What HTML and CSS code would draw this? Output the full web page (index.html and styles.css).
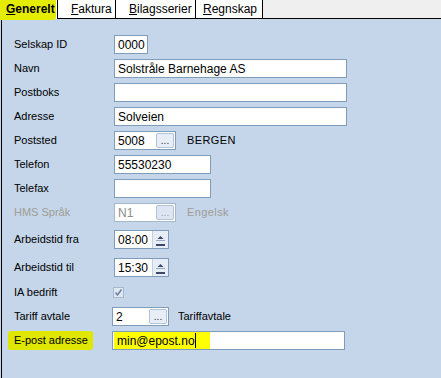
FILE: index.html
```html
<!DOCTYPE html>
<html lang="no">
<head>
  <meta charset="UTF-8">
  <title>Generelt</title>
  <link rel="stylesheet" href="styles.css">
</head>
<body>
  <div class="tabs">
    <div class="tab active"><span class="hl"><u>G</u>enerelt</span></div>
    <div class="tab tab-faktura"><u>F</u>aktura</div>
    <div class="tab tab-bilag"><u>B</u>ilagsserier</div>
    <div class="tab tab-regnskap"><u>R</u>egnskap</div>
    <div class="tab-rest"></div>
  </div>

  <div class="panel">
    <div class="row">
      <div class="label">Selskap ID</div>
      <div class="field w-id">0000</div>
    </div>
    <div class="row">
      <div class="label">Navn</div>
      <div class="field w-long">Solstråle Barnehage AS</div>
    </div>
    <div class="row">
      <div class="label">Postboks</div>
      <div class="field w-long"></div>
    </div>
    <div class="row">
      <div class="label">Adresse</div>
      <div class="field w-long">Solveien</div>
    </div>
    <div class="row">
      <div class="label">Poststed</div>
      <div class="field w-lookup">5008<span class="dots">...</span></div>
      <div class="after">BERGEN</div>
    </div>
    <div class="row">
      <div class="label">Telefon</div>
      <div class="field w-mid">55530230</div>
    </div>
    <div class="row">
      <div class="label">Telefax</div>
      <div class="field w-mid"></div>
    </div>
    <div class="row disabled">
      <div class="label">HMS Språk</div>
      <div class="field w-lookup">N1<span class="dots">...</span></div>
      <div class="after">Engelsk</div>
    </div>
    <div class="row tall">
      <div class="label">Arbeidstid fra</div>
      <div class="field w-time">08:00<span class="spin">
        <svg width="15" height="17" viewBox="0 0 15 17"><path d="M4.5 8 L7.5 5 L10.5 8 Z" fill="#3c4a6a"/><path d="M3 9.5 H12" stroke="#9aaac4"/><path d="M3 14 H12" stroke="#3c4a6a" stroke-width="2"/></svg>
      </span></div>
    </div>
    <div class="row tall">
      <div class="label">Arbeidstid til</div>
      <div class="field w-time">15:30<span class="spin">
        <svg width="15" height="17" viewBox="0 0 15 17"><path d="M4.5 8 L7.5 5 L10.5 8 Z" fill="#3c4a6a"/><path d="M3 9.5 H12" stroke="#9aaac4"/><path d="M3 14 H12" stroke="#3c4a6a" stroke-width="2"/></svg>
      </span></div>
    </div>
    <div class="row">
      <div class="label">IA bedrift</div>
      <div class="check">
        <svg width="9" height="9" viewBox="0 0 9 9"><path d="M1.5 4.5 L3.5 7 L7.5 1.5" fill="none" stroke="#6c84a8" stroke-width="1.6"/></svg>
      </div>
    </div>
    <div class="row">
      <div class="label">Tariff avtale</div>
      <div class="field w-tariff">2<span class="dots">...</span></div>
      <div class="after near">Tariffavtale</div>
    </div>
    <div class="row">
      <div class="label"><span class="hl-label">E-post adresse</span></div>
      <div class="field w-epost"><span class="hl-text">min@epost.no<span class="caret"></span></span></div>
    </div>
  </div>
</body>
</html>
```

FILE: styles.css
```css
body {
  margin: 0;
  font-family: "Liberation Sans", Arial, sans-serif;
  font-size: 11px;
  color: #000;
  background-color: #c5d6ea;
  width: 441px;
  height: 378px;
  overflow: hidden;
}

/* faner */
.tabs {
  display: flex;
  height: 19px;
  background-color: #efefef;
  font-size: 12px;
}

.tab {
  background-color: #fff;
  border-right: 1px solid #000;
  border-bottom: 1px solid #000;
  height: 18px;
  line-height: 19px;
  box-sizing: content-box;
}

.tab.active {
  width: 57px;
  border-bottom: none;
  height: 19px;
  padding: 0;
}

.tab.active .hl {
  display: block;
  background-color: #e4ec00;
  height: 20px;
  margin-right: 1px;
  border-radius: 0 0 3px 0;
  padding-left: 6px;
  font-weight: bold;
  line-height: 19px;
}

.tab-faktura {
  width: 44px;
  padding-left: 13px;
}

.tab-bilag {
  width: 66px;
  padding-left: 13px;
}

.tab-regnskap {
  width: 59px;
  padding-left: 7px;
}

.tab-rest {
  flex: 1;
  border-bottom: 1px solid #000;
  height: 18px;
}

/* innhold */
.panel {
  margin-left: 1px;
  border-left: 1px solid #000;
  padding-top: 13px;
  padding-left: 12px;
  height: 346px;
}

.row {
  display: flex;
  align-items: center;
  height: 24px;
}

.row.tall {
  height: 26px;
  margin-top: 2px;
}

.label {
  width: 100px;
  flex-shrink: 0;
  white-space: nowrap;
}

.disabled {
  color: #a09c94;
}

.field {
  position: relative;
  height: 17px;
  line-height: 18px;
  font-size: 12px;
  background-color: #fff;
  border: 1px solid #7f9db9;
  padding-left: 3px;
  box-sizing: content-box;
  white-space: nowrap;
}

.w-id { width: 29px; }
.w-long { width: 228px; }
.w-mid { width: 92px; }
.w-lookup { width: 57px; }
.w-time { width: 50px; }

.w-tariff {
  width: 52px;
  margin-left: -2px;
}

.w-epost {
  width: 228px;
  margin-left: -2px;
}

.dots {
  position: absolute;
  right: 1px;
  top: 1px;
  width: 16px;
  height: 13px;
  line-height: 13px;
  text-align: center;
  font-size: 10px;
  color: #333;
  background-color: #e7eef8;
  border: 1px solid #b5c3d6;
  border-radius: 2px;
  box-sizing: content-box;
}

.disabled .field {
  border-color: #a6b8cc;
  color: #8d8d8d;
}

.disabled .dots {
  background-color: #dde6f2;
  color: #9aa3ae;
}

.spin {
  position: absolute;
  right: 0;
  top: 0;
  width: 15px;
  height: 17px;
  background-color: #e6edf7;
  border-left: 1px solid #c4d0e0;
  display: flex;
}

.after {
  margin-left: 11px;
  letter-spacing: 0.4px;
}

.after.near {
  margin-left: 9px;
  letter-spacing: 0;
}

.check {
  width: 9px;
  height: 9px;
  border: 1px solid #a8b8cc;
  background-color: #dfe7f2;
  margin-left: -1px;
  display: flex;
}

.hl-label {
  background-color: #dfe600;
  padding: 3px 5px 4px 6px;
  margin-left: -6px;
  border-radius: 3px;
}

.hl-text {
  display: inline-block;
  background-color: #ffff00;
  height: 17px;
  padding: 0 14px 0 3px;
  margin-left: -2px;
}

.caret {
  display: inline-block;
  width: 1px;
  height: 15px;
  background-color: #000;
  vertical-align: -3px;
}
```
